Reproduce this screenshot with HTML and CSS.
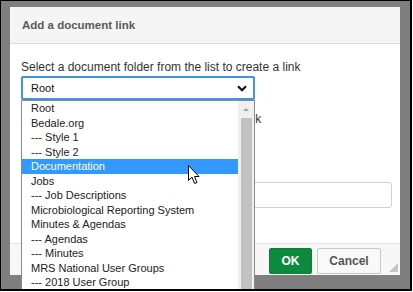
FILE: index.html
```html
<html>
    <head>
        <title>Add a document link</title>
        <link rel="stylesheet" href="styles.css">
    </head>
    <body>
        <div class="screen">
            <div class="dialog">
                <div class="dialog-header">Add a document link</div>
                <div class="dialog-body">
                    <p class="label">Select a document folder from the list to create a link</p>
                    <div class="picker">
                        <div class="select">
                            <span>Root</span>
                            <svg class="chevron" width="10" height="7" viewBox="0 0 10 7">
                                <path d="M1 1.2 L5 5.2 L9 1.2" fill="none" stroke="#111" stroke-width="2.2"/>
                            </svg>
                        </div>
                        <div class="listbox">
                            <ul class="options">
                                <li>Root</li>
                                <li>Bedale.org</li>
                                <li>--- Style 1</li>
                                <li>--- Style 2</li>
                                <li class="selected">Documentation</li>
                                <li>Jobs</li>
                                <li>--- Job Descriptions</li>
                                <li>Microbiological Reporting System</li>
                                <li>Minutes &amp; Agendas</li>
                                <li>--- Agendas</li>
                                <li>--- Minutes</li>
                                <li>MRS National User Groups</li>
                                <li>--- 2018 User Group</li>
                            </ul>
                            <div class="scrollbar">
                                <div class="arrow-up"></div>
                                <div class="thumb"></div>
                            </div>
                        </div>
                    </div>
                    <p class="label second">Or type the address of a page to create a link</p>
                    <input type="text" class="link-text">
                </div>
                <div class="dialog-footer">
                    <button class="ok">OK</button>
                    <button class="cancel">Cancel</button>
                </div>
                <div class="grip"></div>
            </div>
            <!-- mouse pointer over the list -->
            <svg class="pointer" width="13" height="20" viewBox="0 0 13 20">
                <path d="M0.5 0.5 L0.5 15.5 L4 12.2 L6.6 18.5 L9 17.5 L6.5 11.5 L11 11.5 Z" fill="#fff" stroke="#000" stroke-width="1" stroke-linejoin="round"/>
            </svg>
        </div>
    </body>
</html>
```

FILE: styles.css
```css
body{
    margin: 0;
    background-color: white;
    font-family: "Liberation Sans", Arial, sans-serif;
}
.screen{
    width: 412px;
    height: 291px;
    box-sizing: border-box;
    border: solid black;
    border-width: 1px 2px 2px 1px;
    background-color: #7f7f7f;
    padding: 6px 0 0 9px;
    overflow: hidden;
    position: relative;
}
.dialog{
    width: 390px;
    height: 268px;
    background-color: white;
    display: flex;
    flex-direction: column;
    position: relative;
}
.dialog-header{
    height: 36px;
    line-height: 36px;
    padding-left: 12px;
    background-color: #f5f5f5;
    border-bottom: 1px solid #dedede;
    color: #5a5a5a;
    font-size: 11.5px;
    font-weight: bold;
}
.dialog-body{
    flex: 1;
    padding: 16px 8px 0 11px;
}
.label{
    margin: 0;
    font-size: 12px;
    line-height: 14px;
    color: #333;
}
.second{
    margin-top: 12px;
}
.picker{
    position: relative;
    width: 234px;
    margin-top: 2px;
}
.select{
    height: 24px;
    box-sizing: border-box;
    border: 2px solid #3d94e0;
    border-radius: 2px;
    padding: 0 6px 0 8px;
    display: flex;
    align-items: center;
    justify-content: space-between;
    font-size: 11px;
    color: #111;
}
.listbox{
    position: absolute;
    top: 100%;
    left: 0;
    width: 234px;
    height: 200px;
    box-sizing: border-box;
    border: 1px solid #8a8a8a;
    background-color: white;
    display: flex;
    z-index: 2;
}
.options{
    list-style: none;
    margin: 0;
    padding: 0;
    flex: 1;
}
.options li{
    height: 14.5px;
    line-height: 14.5px;
    padding-left: 9px;
    font-size: 11px;
    color: #222;
    white-space: nowrap;
}
.options li.selected{
    background-color: #3399ff;
    color: white;
}
.scrollbar{
    width: 16px;
    background-color: #f0f0f0;
    display: flex;
    flex-direction: column;
    align-items: center;
}
.arrow-up{
    width: 0;
    height: 0;
    margin-top: 7px;
    border-left: 3px solid transparent;
    border-right: 3px solid transparent;
    border-bottom: 3px solid #a3a3a3;
}
.thumb{
    width: 11px;
    flex: 1;
    margin-top: 7px;
    background-color: #c1c1c1;
}
.link-text{
    display: block;
    width: 371px;
    height: 26px;
    margin-top: 56px;
    box-sizing: border-box;
    border: 1px solid #d2d2d2;
    border-radius: 3px;
}
.dialog-footer{
    height: 32px;
    box-sizing: border-box;
    border-top: 1px solid #e3e3e3;
    background-color: #f7f7f7;
    padding: 4px 19px 0 0;
    display: flex;
    justify-content: flex-end;
    align-items: flex-start;
    gap: 5px;
}
.dialog-footer button{
    height: 26px;
    border-radius: 2px;
    font-family: "Liberation Sans", Arial, sans-serif;
    font-size: 12px;
    font-weight: bold;
    cursor: pointer;
}
.ok{
    width: 43px;
    border: 1px solid #0c7f39;
    background-color: #0e8a3e;
    color: white;
}
.cancel{
    width: 64px;
    border: 1px solid #c9c9c9;
    background-color: #f9f9f9;
    color: #555;
}
.grip{
    position: absolute;
    right: 2px;
    bottom: 3px;
    width: 0;
    height: 0;
    border-left: 9px solid transparent;
    border-bottom: 9px solid #c6c6c6;
}
.pointer{
    position: absolute;
    left: 187px;
    top: 164px;
    z-index: 3;
}
```
